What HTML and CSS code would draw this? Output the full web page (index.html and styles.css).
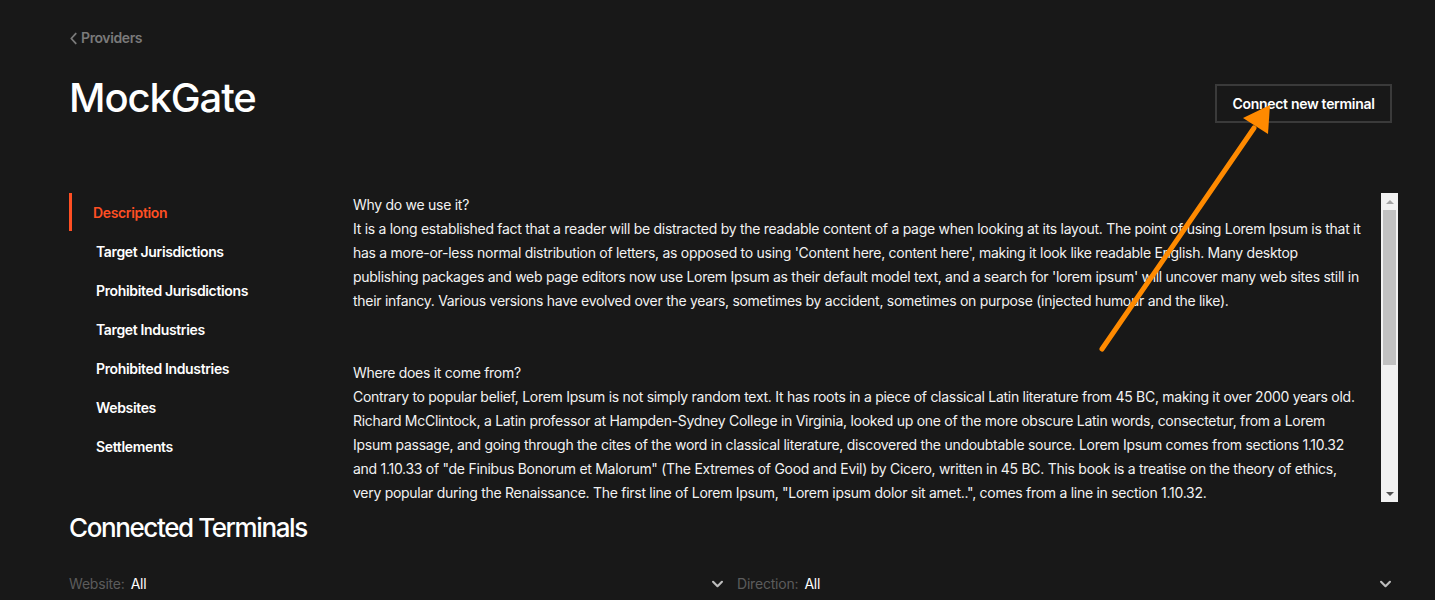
FILE: index.html
```html
<!DOCTYPE html>
<html lang="en">
<head>
<meta charset="utf-8">
<title>MockGate</title>
<link rel="stylesheet" href="styles.css">
</head>
<body>
<div class="page">
  <a class="back" href="#"><svg class="back-icon" viewBox="0 0 10 14" width="9" height="13"><path d="M7.5 1.5 L2.5 7 L7.5 12.5" fill="none" stroke="currentColor" stroke-width="2" stroke-linecap="round" stroke-linejoin="round"/></svg>Providers</a>
  <header class="head">
    <h1 class="title">MockGate</h1>
    <button class="btn">Connect new terminal</button>
  </header>
  <section class="main">
    <nav class="side">
      <a class="side-item active" href="#">Description</a>
      <a class="side-item" href="#">Target Jurisdictions</a>
      <a class="side-item" href="#">Prohibited Jurisdictions</a>
      <a class="side-item" href="#">Target Industries</a>
      <a class="side-item" href="#">Prohibited Industries</a>
      <a class="side-item" href="#">Websites</a>
      <a class="side-item" href="#">Settlements</a>
    </nav>
    <div class="desc">
      <div class="desc-text">
        <p>Why do we use it?<br>It is a long established fact that a reader will be distracted by the readable content of a page when looking at its layout. The point of using Lorem Ipsum is that it has a more-or-less normal distribution of letters, as opposed to using 'Content here, content here', making it look like readable English. Many desktop publishing packages and web page editors now use Lorem Ipsum as their default model text, and a search for 'lorem ipsum' will uncover many web sites still in their infancy. Various versions have evolved over the years, sometimes by accident, sometimes on purpose (injected humour and the like).</p>
        <p class="gap">Where does it come from?<br>Contrary to popular belief, Lorem Ipsum is not simply random text. It has roots in a piece of classical Latin literature from 45 BC, making it over 2000 years old. Richard McClintock, a Latin professor at Hampden-Sydney College in Virginia, looked up one of the more obscure Latin words, consectetur, from a Lorem Ipsum passage, and going through the cites of the word in classical literature, discovered the undoubtable source. Lorem Ipsum comes from sections 1.10.32 and 1.10.33 of "de Finibus Bonorum et Malorum" (The Extremes of Good and Evil) by Cicero, written in 45 BC. This book is a treatise on the theory of ethics, very popular during the Renaissance. The first line of Lorem Ipsum, "Lorem ipsum dolor sit amet..", comes from a line in section 1.10.32.</p>
      </div>
      <div class="scrollbar">
        <span class="sb-arrow up"></span>
        <span class="sb-track"><span class="sb-thumb"></span></span>
        <span class="sb-arrow down"></span>
      </div>
    </div>
  </section>
  <h2 class="sub">Connected Terminals</h2>
  <div class="filters">
    <div class="filter"><span class="f-label">Website:</span><span class="f-val">All</span><svg class="chev" viewBox="0 0 14 9" width="13" height="8"><path d="M2 2 L7 7 L12 2" fill="none" stroke="currentColor" stroke-width="2.4" stroke-linecap="round" stroke-linejoin="round"/></svg></div>
    <div class="filter"><span class="f-label">Direction:</span><span class="f-val">All</span><svg class="chev" viewBox="0 0 14 9" width="13" height="8"><path d="M2 2 L7 7 L12 2" fill="none" stroke="currentColor" stroke-width="2.4" stroke-linecap="round" stroke-linejoin="round"/></svg></div>
  </div>
</div>
<svg class="annot" viewBox="0 0 1435 600" width="1435" height="600">
  <line x1="1102" y1="349" x2="1254" y2="128" stroke="#ff8a00" stroke-width="5" stroke-linecap="round"/>
  <polygon points="1270,105 1268,134 1243,118" fill="#ff8a00"/>
</svg>
</body>
</html>
```

FILE: styles.css
```css
* { box-sizing: border-box; }
html, body { margin: 0; padding: 0; }
body {
  background: #181818;
  color: #fff;
  font-family: Inter, "Noto Sans", sans-serif;
  width: 1435px;
  height: 600px;
  overflow: hidden;
  position: relative;
}
.page {
  padding: 28px 43px 0 69px;
}
.back {
  display: flex;
  align-items: center;
  gap: 3px;
  color: #7a7a7a;
  font-size: 14px;
  font-weight: 600;
  letter-spacing: -0.4px;
  line-height: 20px;
  text-decoration: none;
}
.back-icon { margin-top: 1px; }
.head {
  display: flex;
  justify-content: space-between;
  align-items: center;
  margin-top: 29px;
  height: 50px;
}
.title {
  margin: 0;
  font-size: 40px;
  font-weight: 500;
  letter-spacing: -1.1px;
  line-height: 48px;
  margin-top: -9px;
}
.btn {
  background: transparent;
  border: 2px solid #3a3a3a;
  color: #fff;
  font-family: Inter, sans-serif;
  font-size: 14px;
  font-weight: 600;
  letter-spacing: -0.3px;
  height: 39px;
  width: 177px;
  padding: 0;
  margin-top: 2px;
}
.main {
  display: flex;
  margin-top: 66px;
  margin-right: -6px;
  gap: 13px;
}
.side {
  width: 258px;
  flex: none;
  display: flex;
  flex-direction: column;
}
.side-item {
  display: flex;
  align-items: center;
  height: 39px;
  padding-left: 27px;
  color: #fff;
  text-decoration: none;
  font-size: 14px;
  font-weight: 600;
  letter-spacing: -0.35px;
}
.side-item.active {
  color: #ff4f23;
  padding-left: 21px;
  border-left: 3px solid #ff4f23;
  height: 38px;
  margin-bottom: 1px;
  letter-spacing: -0.35px;
}
.desc {
  flex: 1;
  display: flex;
  height: 309px;
}
.desc-text {
  flex: 1;
  overflow: hidden;
  padding: 0 17px 0 13px;
  font-size: 14px;
  line-height: 24px;
  letter-spacing: -0.28px;
  color: #f2f2f2;
}
.desc-text p { margin: 0; }
.desc-text p.gap { margin-top: 48px; }
.scrollbar {
  width: 17px;
  flex: none;
  background: #f1f1f1;
  display: flex;
  flex-direction: column;
  align-items: center;
}
.sb-arrow {
  height: 17px;
  width: 17px;
  display: flex;
  align-items: center;
  justify-content: center;
}
.sb-arrow::before {
  content: "";
  border-left: 4px solid transparent;
  border-right: 4px solid transparent;
}
.sb-arrow.up::before { border-bottom: 4px solid #a3a3a3; }
.sb-arrow.down::before { border-top: 4px solid #505050; }
.sb-track {
  flex: 1;
  width: 100%;
  padding: 0 2px;
  display: flex;
  flex-direction: column;
}
.sb-thumb {
  height: 155px;
  background: #c1c1c1;
}
.sub {
  margin: 11px 0 0;
  font-size: 26px;
  font-weight: 500;
  letter-spacing: -1.4px;
  line-height: 30px;
}
.filters {
  display: flex;
  gap: 13px;
  margin-top: 31px;
}
.filter {
  flex: 1;
  display: flex;
  align-items: center;
  font-size: 14px;
  letter-spacing: -0.2px;
  line-height: 20px;
}
.f-label { color: #5c5c5c; margin-right: 6px; }
.f-val { color: #fff; flex: 1; }
.chev { color: #bdbdbd; }
.annot {
  position: absolute;
  left: 0;
  top: 0;
  pointer-events: none;
}
```
